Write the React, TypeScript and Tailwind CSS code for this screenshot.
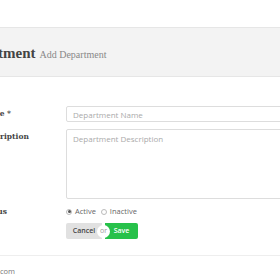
export default function App() {
  return (
    <div className="w-[280px] h-[280px] overflow-hidden bg-white">
      <div className="-ml-[60px] w-[400px]">
        {/* Page header */}
        <div className="mt-[27px] h-[50px] border-y border-[#e6e6e6] bg-[#f3f3f3] flex items-center pl-[18px] pt-[3px]">
          <h1 className="font-['Liberation_Serif',serif] font-bold text-[15px] text-[#444]">
            Department
            <span className="ml-[4px] font-normal text-[10px] text-[#888]">Add Department</span>
          </h1>
        </div>

        {/* Form */}
        <div className="pt-[29px] pl-[40px] pb-[16px] border-b border-[#eee]">
          <div className="flex">
            <label className="w-[86px] pt-[2px] font-['DejaVu_Serif',serif] font-bold text-[7.5px] text-[#444]">
              Name *
            </label>
            <input
              placeholder="Department Name"
              className="w-[240px] h-[16px] border border-[#ddd] rounded-[2px] px-[6px] font-['Open_Sans',sans-serif] text-[8px] text-[#555] placeholder:text-[#aaa] outline-none"
            />
          </div>
          <div className="flex mt-[7px]">
            <label className="w-[86px] pt-[2px] font-['DejaVu_Serif',serif] font-bold text-[7.5px] text-[#444]">
              Description
            </label>
            <textarea
              placeholder="Department Description"
              className="w-[240px] h-[70px] border border-[#ddd] rounded-[2px] px-[6px] py-[3px] font-['Open_Sans',sans-serif] text-[8px] text-[#555] placeholder:text-[#aaa] outline-none resize-none"
            />
          </div>
          <div className="flex mt-[7px] items-center">
            <label className="w-[86px] font-['DejaVu_Serif',serif] font-bold text-[7.5px] text-[#444]">Status</label>
            <div className="flex items-center gap-[3px] font-['Open_Sans',sans-serif] text-[7.5px] text-[#666]">
              <span className="w-[6px] h-[6px] rounded-full border border-[#bbb] flex items-center justify-center">
                <span className="w-[3px] h-[3px] rounded-full bg-[#555]" />
              </span>
              <span>Active</span>
              <span className="ml-[2px] w-[6px] h-[6px] rounded-full border border-[#bbb]" />
              <span>Inactive</span>
            </div>
          </div>
          <div className="flex mt-[6px] items-center pl-[86px]">
            <button className="h-[16px] w-[36px] bg-[#e1e1e1] font-['Open_Sans',sans-serif] font-semibold text-[7px] text-[#444] rounded-l-[2px]">
              Cancel
            </button>
            <span className="relative z-10 -mx-[5px] w-[13px] h-[13px] rounded-full bg-white flex items-center justify-center font-['Open_Sans',sans-serif] text-[7px] text-[#999]">
              or
            </span>
            <button className="h-[16px] w-[33px] bg-[#27c14a] font-['Open_Sans',sans-serif] font-semibold text-[7px] text-white rounded-r-[2px]">
              Save
            </button>
          </div>
        </div>

        {/* Footer */}
        <div className="pt-[10px] w-[75px] flex justify-end whitespace-nowrap font-['Open_Sans',sans-serif] text-[7.5px] text-[#777]">
          <span>admin@department.com</span>
        </div>
      </div>
    </div>
  );
}
